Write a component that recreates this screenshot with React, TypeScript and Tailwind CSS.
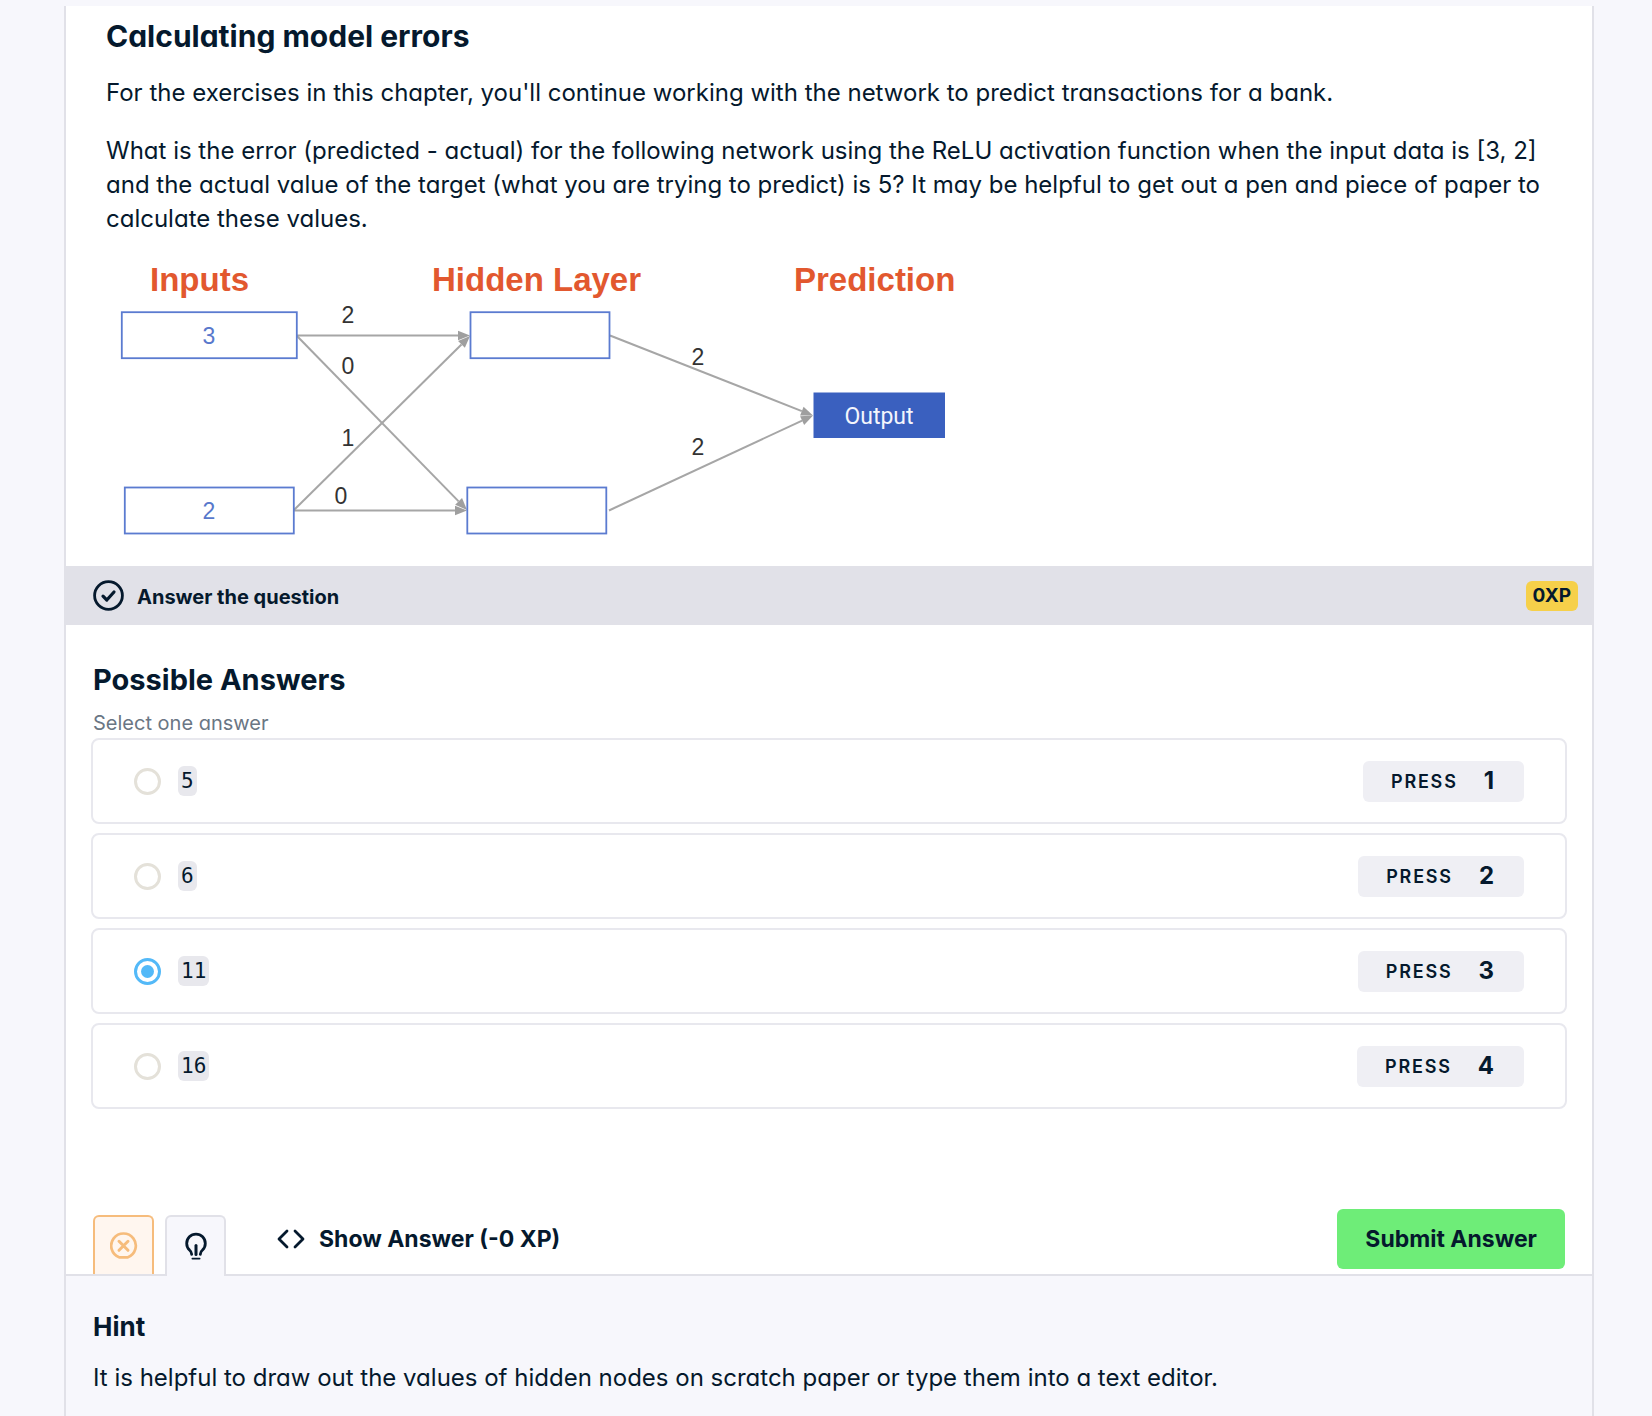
import React, { useState } from 'react';

const answers = [5, 6, 11, 16];

function CheckCircle() {
  return (
    <svg width="31" height="31" viewBox="0 0 31 31" fill="none" stroke="currentColor" aria-hidden="true">
      <circle cx="15.5" cy="15.5" r="13.9" strokeWidth="2.8" />
      <path d="M10 16.2l3.8 3.8 7.2-8" strokeWidth="3.2" strokeLinecap="round" strokeLinejoin="round" />
    </svg>
  );
}

function CrossCircle() {
  return (
    <svg width="28" height="28" viewBox="0 0 28 28" fill="none" stroke="currentColor" aria-hidden="true">
      <path d="M9.1 25.3A12.3 12.3 0 1 1 17.9 25.3z" strokeWidth="2.7" strokeLinejoin="round" />
      <path d="M9 9.3l9 9M18 9.3l-9 9" strokeWidth="3" strokeLinecap="round" />
    </svg>
  );
}

function Bulb() {
  return (
    <svg width="28" height="28" viewBox="0 0 28 28" fill="none" stroke="currentColor" aria-hidden="true">
      <path
        d="M9.7 22.4C9.6 20.4 8.9 19.2 7.5 18A9.3 9.3 0 1 1 20.5 18C19.1 19.2 18.4 20.4 18.3 22.4"
        strokeWidth="2.8"
        strokeLinecap="round"
      />
      <path d="M14 13.4v9.2" strokeWidth="3" strokeLinecap="round" />
      <path d="M10.4 26.6h7.2" strokeWidth="1.8" strokeLinecap="round" />
    </svg>
  );
}

function Code() {
  return (
    <svg width="28" height="20" viewBox="0 0 28 20" fill="none" stroke="currentColor" strokeWidth="2.8" strokeLinecap="round" strokeLinejoin="round" aria-hidden="true">
      <path d="M10 2L2 10l8 8M18 2l8 8-8 8" />
    </svg>
  );
}

function Arrow({ from, to }: { from: [number, number]; to: [number, number] }) {
  const dx = to[0] - from[0];
  const dy = to[1] - from[1];
  const len = Math.hypot(dx, dy);
  const ux = dx / len;
  const uy = dy / len;
  const bx = to[0] - ux * 12;
  const by = to[1] - uy * 12;
  return (
    <g>
      <line x1={from[0]} y1={from[1]} x2={bx} y2={by} stroke="#a6a6a6" strokeWidth="2" />
      <polygon
        points={`${to[0]},${to[1]} ${bx - uy * 4.8},${by + ux * 4.8} ${bx + uy * 4.8},${by - ux * 4.8}`}
        fill="#9f9f9f"
      />
    </g>
  );
}

function NetworkDiagram() {
  return (
    <svg
      className="mt-[15px] mb-[15px] block w-[860px] max-w-full"
      viewBox="106 251 860 300"
      role="img"
      aria-label="Network with two inputs, a hidden layer of two nodes and one output"
    >
      <g fontFamily='"Liberation Sans", Arial, sans-serif' fontWeight="700" fontSize="33" fill="#e2582f">
        <text x="150" y="291">Inputs</text>
        <text x="432" y="291">Hidden Layer</text>
        <text x="794" y="291">Prediction</text>
      </g>
      <Arrow from={[297, 335.5]} to={[470, 335.5]} />
      <Arrow from={[297, 336]} to={[467, 510]} />
      <Arrow from={[294, 510]} to={[470, 336]} />
      <Arrow from={[294, 510.5]} to={[467, 510.5]} />
      <Arrow from={[610, 335.5]} to={[813, 415.5]} />
      <Arrow from={[609, 510.5]} to={[813, 415.5]} />
      <g fill="#fff" stroke="#5b7bd0" strokeWidth="1.8">
        <rect x="121.8" y="312.2" width="175" height="46" />
        <rect x="124.8" y="487.5" width="169" height="46" />
        <rect x="470.5" y="312.2" width="139" height="46" />
        <rect x="467.3" y="487.5" width="139" height="46" />
      </g>
      <rect x="813.5" y="392.5" width="131.5" height="45.5" fill="#3a60bf" />
      <g fontFamily='"Liberation Sans", Arial, sans-serif' fontSize="23" textAnchor="middle">
        <g fill="#5878cc">
          <text x="209" y="343.5">3</text>
          <text x="209" y="519">2</text>
        </g>
        <g fill="#333">
          <text x="348" y="323">2</text>
          <text x="348" y="374">0</text>
          <text x="348" y="446">1</text>
          <text x="341" y="504">0</text>
          <text x="698" y="365">2</text>
          <text x="698" y="455">2</text>
        </g>
      </g>
      <text x="879" y="423.5" fontFamily="Roboto, sans-serif" fontSize="23" textAnchor="middle" fill="#f3f5fc">
        Output
      </text>
    </svg>
  );
}

export default function App() {
  const [selected, setSelected] = useState(2);

  return (
    <div className="flex min-h-screen flex-col bg-[#f7f7fc] pt-1.5 pr-[58px] pl-16 font-['Inter',sans-serif] text-[#05192d] [font-feature-settings:'cv11']">
      <main className="flex flex-1 flex-col border-x-2 border-[#e1e1e8] bg-white">
        <section className="pt-3 pr-7 pl-10">
          <h1 className="text-3xl leading-9 font-bold">Calculating model errors</h1>
          <p className="mt-[22px] text-2xl leading-[34px]">
            For the exercises in this chapter, you'll continue working with the network to predict transactions for a bank.
          </p>
          <p className="mt-6 text-2xl leading-[34px]">
            What is the error (predicted - actual) for the following network using the ReLU activation function when the
            input data is [3, 2] and the actual value of the target (what you are trying to predict) is 5? It may be helpful
            to get out a pen and piece of paper to calculate these values.
          </p>
          <NetworkDiagram />
        </section>

        <div className="flex h-[59px] items-center gap-3 bg-[#e1e1e8] pr-3.5 pl-[27px]">
          <CheckCircle />
          <h2 className="pt-0.5 pl-px text-xl leading-7 font-bold">Answer the question</h2>
          <span className="ml-auto rounded-md bg-[#f6d04a] px-[7px] text-[19px] leading-[30px] font-bold">0XP</span>
        </div>

        <section className="px-[25px] pt-9">
          <h2 id="answers-title" className="px-0.5 text-[29px] leading-[38px] font-bold">
            Possible Answers
          </h2>
          <p className="mt-2.5 px-0.5 text-xl leading-7 text-[#6a7684]">Select one answer</p>
          <div className="mt-px flex flex-col gap-[9px]" role="radiogroup" aria-labelledby="answers-title">
            {answers.map((answer, i) => (
              <label key={answer} className="flex h-[86px] items-center rounded-lg border-2 border-[#e8e8ee] px-[41px]">
                <input
                  type="radio"
                  name="answer"
                  checked={selected === i}
                  onChange={() => setSelected(i)}
                  className="grid size-[27px] appearance-none place-items-center rounded-full border-3 border-[#e4e1d9] before:size-[13px] before:rounded-full checked:border-[#53b9f8] checked:before:bg-[#53b9f8]"
                />
                <code className="ml-[17px] rounded-md bg-[#e8e8ed] px-[3px] font-['DejaVu_Sans_Mono',monospace] text-[21px] leading-[30px]">
                  {answer}
                </code>
                <span className="ml-auto flex h-[41px] items-center gap-[26px] rounded-md bg-[#efeff4] pr-[30px] pl-7">
                  <span className="pt-0.5 text-lg font-semibold tracking-widest">PRESS</span>
                  <span className="text-2xl font-bold">{i + 1}</span>
                </span>
              </label>
            ))}
          </div>
        </section>

        <div className="mt-[100px] flex items-end border-b-2 border-[#e1e1e8] pr-[27px] pl-[27px]">
          <div className="flex gap-[11px]" role="tablist">
            <button
              type="button"
              role="tab"
              aria-selected="false"
              aria-label="Incorrect submission"
              className="flex h-[59px] w-[61px] items-center justify-center rounded-t-md border-2 border-b-0 border-[#f6bc7c] bg-[#fff6ef] text-[#f6bc7c]"
            >
              <CrossCircle />
            </button>
            <button
              type="button"
              role="tab"
              aria-selected="true"
              aria-label="Hint"
              className="-mb-0.5 flex h-[61px] w-[61px] items-center justify-center rounded-t-md border-2 border-b-0 border-[#e1e1e8] bg-[#f7f7fc] pb-0.5"
            >
              <Bulb />
            </button>
          </div>
          <button type="button" className="mb-[5px] ml-[51px] flex h-[60px] items-center gap-3.5 text-[23px] font-bold">
            <Code />
            Show Answer (-0 XP)
          </button>
          <button type="button" className="mb-[5px] ml-auto h-[60px] rounded-md bg-[#6eed78] px-7 text-[23px] font-bold">
            Submit Answer
          </button>
        </div>

        <section className="flex-1 bg-[#f7f7fc] px-[27px] pt-[33px] pb-4">
          <h2 className="text-[26px] leading-9 font-bold">Hint</h2>
          <p className="mt-4 text-2xl leading-[34px]">
            It is helpful to draw out the values of hidden nodes on scratch paper or type them into a text editor.
          </p>
        </section>
      </main>
    </div>
  );
}
